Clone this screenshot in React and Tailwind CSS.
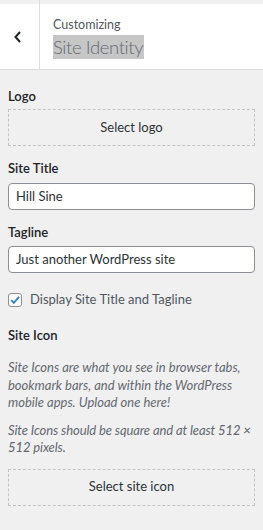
export default function App() {
  return (
    <div className="w-[263px] h-[530px] bg-[#f0f0f1] overflow-hidden text-[#1d2327] font-['Lato',sans-serif]">
      <div className="h-[4px] flex">
        <div className="w-[40px] border-r border-[#dcdcde]"></div>
      </div>
      <div className="h-[66px] bg-white border-b border-[#dcdcde] flex">
        <div className="w-[40px] border-r border-[#dcdcde] flex items-center justify-center">
          <svg width="10" height="14" viewBox="0 0 10 14" className="ml-[-3px]">
            <path d="M7 2 L2.5 7 L7 12" fill="none" stroke="#1d2327" strokeWidth="2" />
          </svg>
        </div>
        <div className="pl-[13px] pt-[12px] flex flex-col items-start">
          <span className="text-[12.5px] leading-[18px] text-[#50575e]">Customizing</span>
          <span className="text-[18.5px] font-light tracking-[-0.4px] leading-[24px] text-[#646970] bg-[#c6c6c6] mt-[1px] pr-[1px]">Site Identity</span>
        </div>
      </div>
      <div className="px-2 pt-[16px]">
        <div className="text-[13px] font-semibold leading-[20px] mb-[3px]">Logo</div>
        <div className="h-[37px] border border-dashed border-[#c3c4c7] flex items-center justify-center text-[13px] text-[#2c3338]">Select logo</div>

        <div className="text-[13px] font-semibold leading-[20px] mt-[12px] mb-[5px]">Site Title</div>
        <div className="h-[27px] bg-white border border-[#8c8f94] rounded-[4px] flex items-center px-[7px] text-[13px] text-[#2c3338]">Hill Sine</div>

        <div className="text-[13px] font-semibold leading-[20px] mt-[12px] mb-[4px]">Tagline</div>
        <div className="h-[27px] bg-white border border-[#8c8f94] rounded-[4px] flex items-center px-[7px] text-[13px] text-[#2c3338]">Just another WordPress site</div>

        <div className="flex items-center mt-[19px] h-[15px]">
          <div className="w-[14px] h-[14px] bg-white border border-[#8c8f94] rounded-[3px] flex items-center justify-center">
            <svg width="12" height="12" viewBox="0 0 12 12">
              <path d="M2.2 6.2 L4.8 8.8 L10 2.8" fill="none" stroke="#3582c4" strokeWidth="1.9" />
            </svg>
          </div>
          <span className="ml-[8px] text-[13px] text-[#50575e]">Display Site Title and Tagline</span>
        </div>

        <div className="text-[13px] font-semibold leading-[20px] mt-[18px]">Site Icon</div>
        <p className="mt-[14px] italic text-[13px] leading-[17.5px] text-[#646970]">
          Site Icons are what you see in browser tabs, bookmark bars, and within the WordPress mobile apps. Upload one here!
        </p>
        <p className="mt-[10px] italic text-[13px] leading-[17.5px] text-[#646970] tracking-[-0.1px]">
          Site Icons should be square and at least <strong className="font-medium">512 × 512</strong> pixels.
        </p>
        <div className="mt-[12px] h-[37px] border border-dashed border-[#c3c4c7] flex items-center justify-center text-[13px] text-[#2c3338]">Select site icon</div>
      </div>
    </div>
  );
}
